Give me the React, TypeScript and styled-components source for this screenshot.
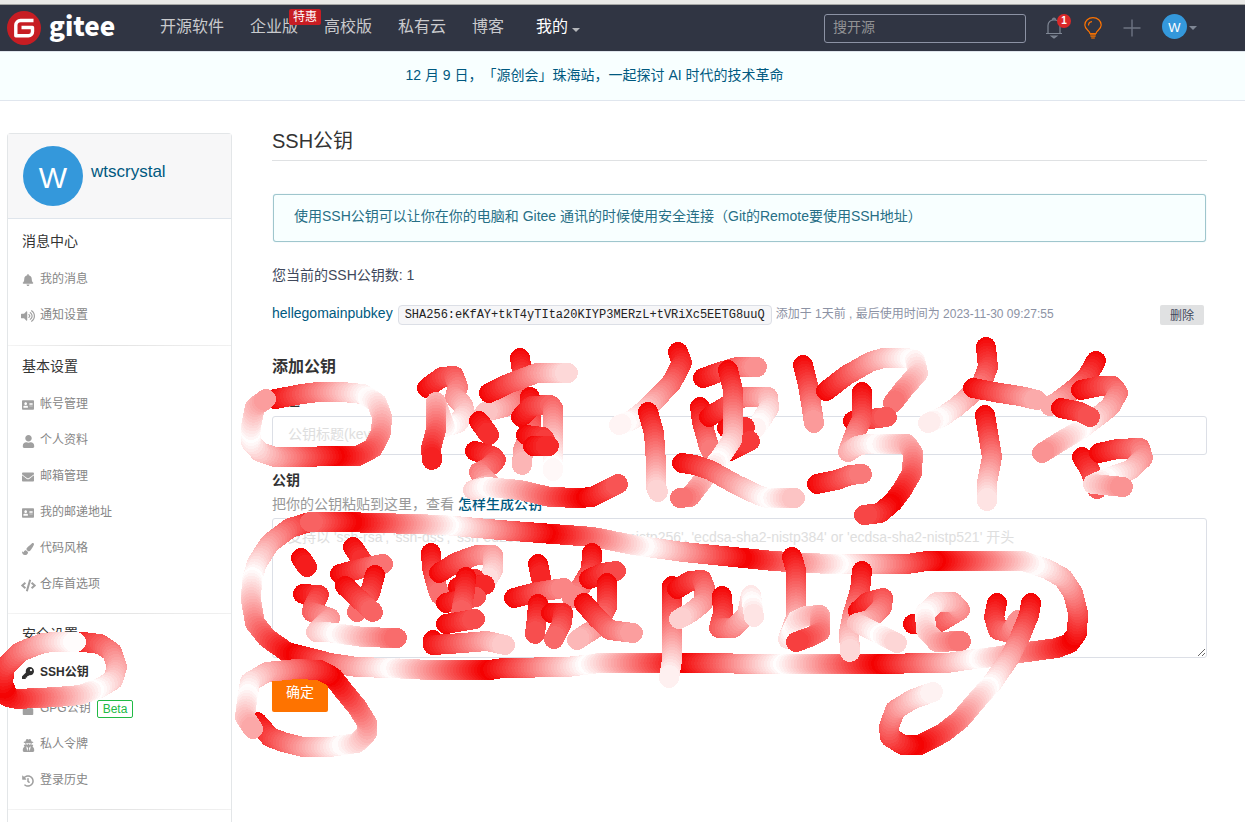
import React from 'react';
import styled, { createGlobalStyle, css } from 'styled-components';
import type { IconType } from 'react-icons';
import {
  FaAddressCard,
  FaBell,
  FaCode,
  FaEnvelope,
  FaHistory,
  FaKey,
  FaLock,
  FaPaintBrush,
  FaUser,
  FaUserSecret,
  FaVolumeUp,
} from 'react-icons/fa';

const sans = `"Liberation Sans", "Noto Sans CJK SC", sans-serif`;
const mono = `"Liberation Mono", "Noto Sans CJK SC", monospace`;

const GlobalStyle = createGlobalStyle`
  *, *::before, *::after { box-sizing: border-box; }
  body { margin: 0; background: #fff; font-family: ${sans}; font-size: 14px; line-height: 20px; color: #40485b; text-spacing-trim: space-all; }
  a { text-decoration: none; color: #005980; }
  h1, h2, h3, p, ul { margin: 0; padding: 0; font-weight: 400; }
  ul { list-style: none; }
  button, input, textarea { font-family: inherit; }
`;

const Page = styled.div`
  position: relative;
  display: flex;
  flex-direction: column;
  min-height: 100vh;
  overflow: hidden;
`;

/* ---------- top navigation ---------- */

const WindowEdge = styled.div`
  height: 5px;
  background: #e9e9e7;
  border-bottom: 1px solid #a5a6a4;
`;

const Navbar = styled.header`
  display: flex;
  align-items: center;
  height: 47px;
  padding: 0 48px 0 7px;
  background: #303543;
  border-bottom: 1px solid #dfe5ec;
`;

const Brand = styled.a`
  display: flex;
  align-items: center;
  gap: 8px;
  width: 153px;
  color: #fff;
  font-family: "Noto Sans CJK SC", sans-serif;
  font-size: 26px;
  font-weight: 900;
  line-height: 36px;
`;

const BrandName = styled.span`
  padding-bottom: 6px;
`;

const NavLinks = styled.nav`
  display: flex;
  align-items: center;
  gap: 26px;
  flex: 1;
`;

const NavLink = styled.a<{ $active?: boolean }>`
  position: relative;
  display: flex;
  align-items: center;
  gap: 4px;
  padding-left: ${(p) => (p.$active ? 6 : 0)}px;
  padding-bottom: 2px;
  font-size: 16px;
  line-height: 24px;
  white-space: nowrap;
  color: ${(p) => (p.$active ? '#fff' : '#c9cacd')};
`;

const PromoTag = styled.span`
  position: absolute;
  top: -6px;
  right: -23px;
  padding: 0 4px;
  border-radius: 2px;
  background: #c71d23;
  color: #fff;
  font-size: 12px;
  line-height: 16px;
`;

const Caret = styled.span<{ $low?: boolean }>`
  border: 4px solid transparent;
  border-top-color: ${(p) => (p.$low ? '#b4b6ba' : '#7f8795')};
  border-bottom-width: 0;
  margin-top: ${(p) => (p.$low ? 6 : 3)}px;
`;

const SearchBox = styled.input`
  width: 202px;
  height: 29px;
  padding: 0 8px 2px;
  border: 1px solid #8c92a4;
  border-radius: 3px;
  background: transparent;
  color: #fff;
  font-size: 14px;
  &::placeholder { color: #929395; opacity: 1; }
`;

const NavTools = styled.div`
  display: flex;
  align-items: center;
  gap: 21px;
  margin-left: 19px;
`;

const ToolButton = styled.button`
  position: relative;
  display: flex;
  align-items: center;
  gap: 2px;
  padding: 0;
  border: 0;
  background: none;
  svg { display: block; }
`;

const AccountButton = styled(ToolButton)`
  padding-bottom: 3px;
`;

const UnreadCount = styled.span`
  position: absolute;
  top: -3px;
  right: -8px;
  width: 14px;
  height: 14px;
  border-radius: 7px;
  background: #db2828;
  color: #fff;
  font-size: 10px;
  font-weight: 700;
  line-height: 14px;
  text-align: center;
`;

const Avatar = styled.span<{ $size: number }>`
  display: flex;
  align-items: center;
  justify-content: center;
  width: ${(p) => p.$size}px;
  height: ${(p) => p.$size}px;
  border-radius: 50%;
  background: #3498db;
  color: #fff;
  font-size: ${(p) => (p.$size > 40 ? 30 : 13)}px;
  line-height: 1;
  padding-top: ${(p) => (p.$size > 40 ? 4 : 1)}px;
`;

const Announcement = styled.a`
  display: block;
  padding: 13px 0 15px;
  padding-right: 56px;
  border-bottom: 1px solid #e0e6ee;
  background: #f8ffff;
  text-align: center;
`;

/* ---------- sidebar ---------- */

const Body = styled.div`
  display: flex;
  flex: 1;
  padding: 0 38px 0 7px;
`;

const Sidebar = styled.aside`
  flex: none;
  width: 225px;
  margin-top: 32px;
  border: 1px solid #e3e6e8;
  border-bottom: 0;
  border-radius: 4px 4px 0 0;
`;

const Profile = styled.div`
  display: flex;
  align-items: flex-start;
  gap: 8px;
  padding: 12px 15px;
  border-bottom: 1px solid #dfe5ec;
  background: #f7f7f8;
`;

const ProfileName = styled.a`
  padding-top: 15px;
  font-size: 17px;
  line-height: 22px;
`;

const MenuSection = styled.section`
  padding: 0 14px 12px;
  background: linear-gradient(90deg, #f4f4f4, #e2e2e2 40%, #f1f1f1) left bottom / 100% 1px no-repeat;
  &:first-of-type { padding-top: 2px; padding-bottom: 13px; }
`;

const MenuTitle = styled.h3`
  padding: 10px 0;
  font-size: 14px;
  line-height: 20px;
  color: #333;
`;

const MenuItem = styled.a<{ $active?: boolean }>`
  display: flex;
  align-items: center;
  gap: 6px;
  height: 36px;
  font-size: 12px;
  line-height: 20px;
  color: ${(p) => (p.$active ? '#2f2f2f' : '#868686')};
  font-weight: ${(p) => (p.$active ? 700 : 400)};
`;

const IconSlot = styled.span<{ $active?: boolean }>`
  display: flex;
  flex: none;
  align-items: center;
  justify-content: center;
  width: 12px;
  padding-top: 2px;
  color: ${(p) => (p.$active ? '#2f2f2f' : '#a0a0a0')};
  svg { flex: none; }
`;

const BetaTag = styled.span`
  margin-top: 2px;
  padding: 0 5px;
  border: 1px solid #21ba45;
  border-radius: 2px;
  color: #21ba45;
  line-height: 16px;
`;

/* ---------- main column ---------- */

const Main = styled.main`
  flex: 1;
  min-width: 0;
  margin-left: 40px;
  padding-top: 26px;
`;

const PageTitle = styled.h1`
  padding-bottom: 5px;
  border-bottom: 1px solid #dfe1e3;
  font-size: 20px;
  line-height: 28px;
  color: #333;
`;

const InfoMessage = styled.p`
  margin: 33px 1px 0;
  padding: 11px 20px 15px;
  border: 1px solid #9fc6cd;
  border-radius: 3px;
  box-shadow: 0 0 1px #a9d5de;
  background: #f8ffff;
  color: #276f86;
`;

const KeyCount = styled.p`
  margin-top: 23px;
`;

const KeyRow = styled.div`
  display: flex;
  align-items: center;
  height: 20px;
  margin-top: 20px;
  padding-right: 3px;
`;

const KeyName = styled.a`
  padding-bottom: 4px;
`;

const Fingerprint = styled.code`
  margin: 0 4px 0 5px;
  padding: 0 6px;
  border: 1px solid #dcdfe6;
  border-radius: 4px;
  background: #f6f6f8;
  color: #222;
  font-family: ${mono};
  font-size: 12px;
  line-height: 18px;
`;

const KeyMeta = styled.span`
  flex: 1;
  padding-bottom: 2px;
  color: #8c92a4;
  font-size: 12px;
`;

const DeleteButton = styled.button`
  height: 20px;
  padding: 0 10px 2px;
  border: 0;
  border-radius: 2px;
  background: #e0e1e2;
  color: #40485b;
  font-size: 12px;
`;

const FormTitle = styled.h2`
  margin: 30px 0 11px;
  font-size: 16px;
  font-weight: 700;
  line-height: 24px;
  color: #333;
`;

const Field = styled.div`
  display: flex;
  flex-direction: column;
  margin-bottom: 15px;
`;

const FieldLabel = styled.label`
  font-weight: 700;
  color: #333;
`;

const Hint = styled.p`
  margin: 4px 0;
  color: #999;
  a { font-weight: 500; }
`;

const fieldBox = css`
  width: 100%;
  border: 1px solid #dcdfe6;
  border-radius: 3px;
  background: #fff;
  color: #40485b;
  font-size: 14px;
  line-height: 20px;
  &::placeholder { color: #dedede; opacity: 1; }
`;

const TextInput = styled.input`
  ${fieldBox}
  height: 39px;
  margin-top: 6px;
  padding: 0 15px 3px;
`;

const KeyInput = styled.textarea`
  ${fieldBox}
  height: 140px;
  padding: 8px 15px;
  resize: vertical;
`;

const SubmitButton = styled.button`
  height: 36px;
  margin-top: 3px;
  padding: 0 14px 6px;
  border: 0;
  border-radius: 2px;
  background: #fe7300;
  color: #fff;
  font-size: 14px;
`;

/* ---------- freehand marker layer ---------- */

const Ink = styled.svg`
  position: absolute;
  top: 0;
  left: 0;
  pointer-events: none;
`;

// Each stroke is a list of x,y pairs in drawing order.
const strokes: string[] = [
  // sidebar ring
  '70,642 83,642 100,644 112,652 117,667 113,680 100,688 80,695 57,697 17,699 8,697 3,683 5,667 20,652 43,643 55,642 76,642',
  // ring around the title input
  '275,399 302,394 318,392 342,392 363,394 377,403 382,417 381,433 373,448 358,456 332,456 302,457 275,457 260,452 251,442 251,427 255,407 266,399',
  '427,388 442,377 454,376 458,387 455,397 463,405 465,413 458,423 445,427 436,402 436,430 431,448 432,460',
  '520,358 522,372 518,392 505,407 485,412',
  '489,393 510,383 537,373 568,373',
  '530,397 531,430 523,450 522,465',
  '521,417 532,406 550,405 553,408 553,447 553,471',
  '526,435 543,437 546,442',
  '533,446 549,446',
  '479,421 489,435',
  '475,451 492,456 496,460 489,467 479,472 490,484 473,490 487,487 520,490 550,497 580,498 592,497 618,484',
  '678,352 682,363 672,382 660,395 647,408 632,420 619,425',
  '648,412 654,433 656,463 656,487 658,492',
  '703,378 720,372 737,367 757,367',
  '700,407 702,422 709,447 712,452',
  '709,417 723,408 743,397 768,397 769,408 758,425 754,430',
  '727,428 745,427',
  '730,451 750,441',
  '728,370 733,390 733,430 732,440 720,458 703,480 690,497 680,498',
  '682,463 695,465 710,470 737,485 758,495 767,498 795,498',
  '803,365 808,385 811,403 814,423',
  '826,391 847,375 870,362 883,358 907,358 915,360 918,373 903,390 893,403',
  '853,421 887,417',
  '862,392 862,420 855,433 848,452 857,446 867,444 907,444 913,453 912,473 902,490 893,502 880,513 864,515',
  '817,484 837,480 850,475 862,474',
  '986,347 988,367 982,383 967,398 955,408 942,417 928,423',
  '1096,361 1087,377 1073,390 1057,402 1050,406',
  '973,388 1000,393 1020,396 1037,400',
  '985,415 988,433 992,457 987,483 987,501',
  '1081,390 1100,386 1113,386 1118,393 1110,407 1097,417 1080,430 1063,440 1042,453',
  '1061,408 1080,412 1090,417',
  '1082,457 1090,470 1097,489',
  '1099,453 1117,449 1140,448 1143,458 1130,470 1107,478 1093,484 1123,487',
  // long ring around the key text area
  '320,522 310,522 290,528 270,543 257,563 252,580 251,600 255,623 267,638 287,652 307,657 330,663 357,667 390,668 430,670 490,670 503,668 567,667 600,663 683,663 783,664 863,664 947,663 967,660 993,657 1020,653 1057,648 1070,643 1077,633 1078,613 1073,593 1063,578 1047,569 1023,561 927,561 907,564 833,564 807,563 773,561 733,557 683,552 633,545 593,537 540,533 500,530 443,525 380,523 340,522 310,522',
  '301,558 307,567',
  '303,594 319,595 313,607 312,612 330,618 316,632 327,632 363,637 397,638',
  '353,547 363,562',
  '340,574 363,568 383,564',
  '375,575 370,593 357,612',
  '345,586 360,600 373,612',
  '431,553 432,568 437,587 440,595',
  '439,573 457,562 477,555 493,555 493,570 487,580',
  '458,587 475,579',
  '470,586 485,585',
  '446,603 476,597',
  '466,577 465,590 461,613',
  '446,624 475,619',
  '433,640 433,645 463,643 487,641 505,645',
  '538,564 541,578',
  '592,553 591,570 582,585 572,598',
  '514,598 537,592 564,588',
  '538,604 537,617 535,634',
  '551,613 563,613 562,623 554,639',
  '589,579 603,573 616,571',
  '607,583 607,607 597,627 577,640',
  '584,603 597,618 610,630 633,633',
  '672,586 672,633 672,660 669,678',
  '677,589 690,581 702,580 705,588 703,603 690,613 679,619',
  '722,596 723,613 719,628 733,628 747,615 751,595 754,617',
  '792,557 796,570 796,617 788,639 797,620 806,616 820,615 820,632 810,637 796,642',
  '862,571 860,590 852,617 849,633 850,652',
  '858,611 868,602 883,598 882,607 870,620 857,623 877,633 897,643',
  '913,624 940,622 960,610 953,602 937,602 925,613 926,630 937,642 961,641',
  '997,603 994,617 998,630 1010,633 1018,620',
  '1031,603 1029,615 1020,637 1010,657 993,682 977,700 960,720 943,733 920,745 903,745 890,737 889,727 895,710 913,699 933,692',
  // ring around the submit button
  '257,722 270,737 283,742 303,747 330,747 357,743 367,733 367,723 357,707 343,690 333,677 320,670 297,669 267,672 250,682 247,700 245,717 253,729',
];

const FADE_LENGTH = 98;
const STEP = 3;

// The marker fades from red to white and back as the pen travels.
const inkColour = (travelled: number) => {
  const phase = (travelled / FADE_LENGTH) % 2;
  const whiteness = phase > 1 ? 2 - phase : phase;
  const channel = Math.round(255 * whiteness);
  return `rgb(${Math.round(244 + 11 * whiteness)},${channel},${channel})`;
};

const MarkerStroke = ({ points }: { points: string }) => {
  const nodes = points.split(' ').map((pair) => pair.split(',').map(Number));
  const pieces: React.ReactNode[] = [];
  let travelled = 0;
  for (let i = 1; i < nodes.length; i += 1) {
    const [x1, y1] = nodes[i - 1];
    const [x2, y2] = nodes[i];
    const length = Math.hypot(x2 - x1, y2 - y1);
    const count = Math.max(1, Math.round(length / STEP));
    for (let k = 0; k < count; k += 1) {
      const a = k / count;
      const b = (k + 1) / count;
      pieces.push(
        <line
          key={`${i}-${k}`}
          x1={x1 + (x2 - x1) * a}
          y1={y1 + (y2 - y1) * a}
          x2={x1 + (x2 - x1) * b}
          y2={y1 + (y2 - y1) * b}
          stroke={inkColour(travelled + length * b)}
        />,
      );
    }
    travelled += length;
  }
  return <g>{pieces}</g>;
};

const MarkerLayer = () => (
  <Ink width="1245" height="822" viewBox="0 0 1245 822" aria-hidden="true">
    <g strokeWidth="20" strokeLinecap="round" fill="none" shapeRendering="crispEdges">
      {strokes.map((points) => (
        <MarkerStroke key={points} points={points} />
      ))}
    </g>
  </Ink>
);

/* ---------- icons ---------- */

const GiteeLogo = () => (
  <svg width="34" height="34" viewBox="0 0 34 34" aria-hidden="true">
    <circle cx="17" cy="17" r="17" fill="#c71d23" />
    <path d="M26.500 9.500H13.500a4.700 4.700 0 0 0-4.700 4.700v10.500h12.700a4 4 0 0 0 4-4v-4.200H14.500" fill="none" stroke="#fff" strokeWidth="3.400" strokeLinejoin="round" />
  </svg>
);

const BellOutline = () => (
  <svg width="18" height="22" viewBox="0 0 18 22" fill="none" stroke="#7f8795" strokeWidth="1.2" aria-hidden="true">
    <path d="M1 16.5h16M3 16.5V8.500C3 5 5.500 2.800 9 2.800S15 5 15 8.500v8M7.600 2.600a1.400 1.400 0 0 1 2.800 0" />
    <path d="M6.500 19.200h5L9 21z" />
  </svg>
);

const Bulb = () => (
  <svg width="18" height="22" viewBox="0 0 18 22" fill="none" stroke="#fe7300" strokeWidth="1.200" aria-hidden="true">
    <path d="M6 16.500C5.600 13.500.800 12.500.800 8A8.200 7.400 0 0 1 17.200 8c0 4.500-4.800 5.500-5.200 8.500z" />
    <path d="M4.500 8.500C4.500 6 6 4.800 8 4.600" />
    <path d="M6 17.500h6M6.400 19.200h5.200M7.200 21h3.600" stroke="#c9640f" strokeWidth="1.600" />
  </svg>
);

const Plus = () => (
  <svg width="18" height="18" viewBox="0 0 18 18" stroke="#6d7483" strokeWidth="1.400" aria-hidden="true">
    <path d="M9 .5v17M.5 9h17" />
  </svg>
);

/* ---------- content ---------- */

type Entry = { label: string; icon: IconType; size?: number; active?: boolean; beta?: boolean };

const sections: { title: string; entries: Entry[] }[] = [
  {
    title: '消息中心',
    entries: [
      { label: '我的消息', icon: FaBell },
      { label: '通知设置', icon: FaVolumeUp, size: 14 },
    ],
  },
  {
    title: '基本设置',
    entries: [
      { label: '帐号管理', icon: FaAddressCard },
      { label: '个人资料', icon: FaUser, size: 13 },
      { label: '邮箱管理', icon: FaEnvelope },
      { label: '我的邮递地址', icon: FaAddressCard },
      { label: '代码风格', icon: FaPaintBrush },
      { label: '仓库首选项', icon: FaCode, size: 15 },
    ],
  },
  {
    title: '安全设置',
    entries: [
      { label: 'SSH公钥', icon: FaKey, active: true },
      { label: 'GPG公钥', icon: FaLock, beta: true },
      { label: '私人令牌', icon: FaUserSecret, size: 13 },
      { label: '登录历史', icon: FaHistory },
    ],
  },
];

export default function App() {
  return (
    <Page>
      <GlobalStyle />
      <WindowEdge />
      <Navbar>
        <Brand href="#">
          <GiteeLogo />
          <BrandName>gitee</BrandName>
        </Brand>
        <NavLinks>
          <NavLink href="#">开源软件</NavLink>
          <NavLink href="#">
            企业版
            <PromoTag>特惠</PromoTag>
          </NavLink>
          <NavLink href="#">高校版</NavLink>
          <NavLink href="#">私有云</NavLink>
          <NavLink href="#">博客</NavLink>
          <NavLink href="#" $active>
            我的
            <Caret $low />
          </NavLink>
        </NavLinks>
        <SearchBox type="search" placeholder="搜开源" aria-label="搜开源" />
        <NavTools>
          <ToolButton aria-label="通知">
            <BellOutline />
            <UnreadCount>1</UnreadCount>
          </ToolButton>
          <ToolButton aria-label="推荐">
            <Bulb />
          </ToolButton>
          <ToolButton aria-label="新建">
            <Plus />
          </ToolButton>
          <AccountButton aria-label="账户">
            <Avatar $size={25}>W</Avatar>
            <Caret />
          </AccountButton>
        </NavTools>
      </Navbar>
      <Announcement href="#">12 月 9 日，「源创会」珠海站，一起探讨 AI 时代的技术革命</Announcement>
      <Body>
        <Sidebar>
          <Profile>
            <Avatar $size={60}>W</Avatar>
            <ProfileName href="#">wtscrystal</ProfileName>
          </Profile>
          {sections.map((section) => (
            <MenuSection key={section.title}>
              <MenuTitle>{section.title}</MenuTitle>
              <ul>
                {section.entries.map(({ label, icon: Icon, size = 12, active, beta }) => (
                  <li key={label}>
                    <MenuItem href="#" $active={active}>
                      <IconSlot $active={active}>
                        <Icon size={size} />
                      </IconSlot>
                      {label}
                      {beta && <BetaTag>Beta</BetaTag>}
                    </MenuItem>
                  </li>
                ))}
              </ul>
            </MenuSection>
          ))}
        </Sidebar>
        <Main>
          <PageTitle>SSH公钥</PageTitle>
          <InfoMessage>
            使用SSH公钥可以让你在你的电脑和 Gitee 通讯的时候使用安全连接（Git的Remote要使用SSH地址）
          </InfoMessage>
          <KeyCount>您当前的SSH公钥数: 1</KeyCount>
          <KeyRow>
            <KeyName href="#">hellegomainpubkey</KeyName>
            <Fingerprint>SHA256:eKfAY+tkT4yTIta20KIYP3MERzL+tVRiXc5EETG8uuQ</Fingerprint>
            <KeyMeta>添加于 1天前 , 最后使用时间为 2023-11-30 09:27:55</KeyMeta>
            <DeleteButton>删除</DeleteButton>
          </KeyRow>
          <form onSubmit={(event) => event.preventDefault()}>
            <FormTitle>添加公钥</FormTitle>
            <Field>
              <FieldLabel htmlFor="key-title">标题</FieldLabel>
              <TextInput id="key-title" placeholder="公钥标题(key)" />
            </Field>
            <Field>
              <FieldLabel htmlFor="key-body">公钥</FieldLabel>
              <Hint>
                把你的公钥粘贴到这里，查看 <a href="#">怎样生成公钥</a>
              </Hint>
              <KeyInput
                id="key-body"
                placeholder="支持以 'ssh-rsa', 'ssh-dss', 'ssh-ed25519', 'ecdsa-sha2-nistp256', 'ecdsa-sha2-nistp384' or 'ecdsa-sha2-nistp521' 开头"
              />
            </Field>
            <SubmitButton type="submit">确定</SubmitButton>
          </form>
        </Main>
      </Body>
      <MarkerLayer />
    </Page>
  );
}
